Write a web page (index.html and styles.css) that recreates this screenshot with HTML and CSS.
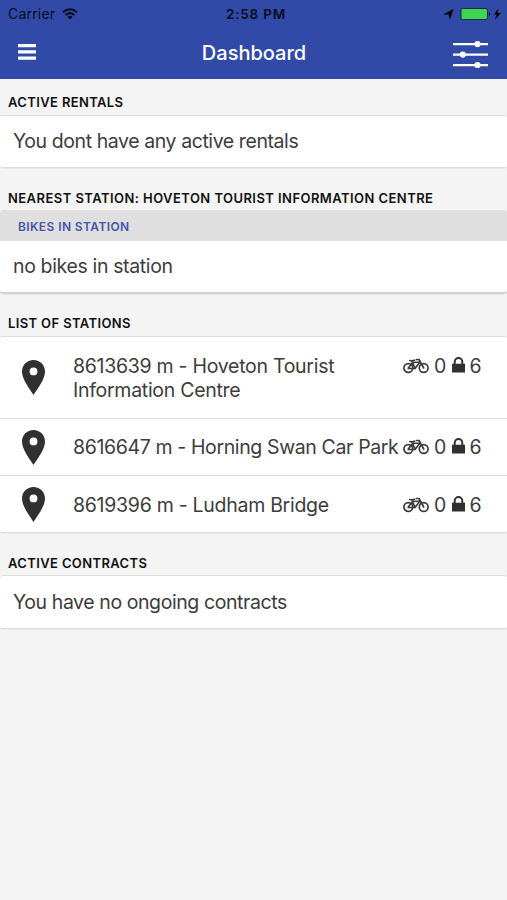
FILE: index.html
```html
<!DOCTYPE html>
<html lang="en">
<head>
<meta charset="utf-8">
<title>Dashboard</title>
<link rel="stylesheet" href="styles.css">
</head>
<body>
<svg class="defs" width="0" height="0" aria-hidden="true">
  <symbol id="pin" viewBox="0 0 23 35"><path fill-rule="evenodd" d="M11.500 0C5 0 0 5 0 11.500C0 19 7 28 11.500 35C16 28 23 19 23 11.500C23 5 18 0 11.500 0ZM11.500 7.500a3.900 3.900 0 1 1 0 7.800a3.900 3.900 0 1 1 0-7.800Z"/></symbol>
  <symbol id="bike" viewBox="0 0 26 16"><g fill="none" stroke="currentColor" stroke-width="1.700" stroke-linecap="round" stroke-linejoin="round"><circle cx="5.300" cy="10" r="4.400"/><circle cx="20.700" cy="10" r="4.400"/><path d="M5.300 10L9.500 4.500L17 4L12 10.500H5.300M9 3L12 10.500M6.800 2.500Q9.500 3.200 11.500 2.200M20.700 10L16 1.500H13.500"/></g></symbol>
  <symbol id="lock" viewBox="0 0 13 16"><path d="M0 6.800h13v8.700H0z"/><path d="M2.700 7.500V4.800a3.800 3.800 0 0 1 7.600 0V7.500" fill="none" stroke="currentColor" stroke-width="2"/></symbol>
</svg>
<header class="header">
  <div class="status">
    <span class="carrier">Carrier</span>
    <svg class="wifi" viewBox="0 0 16 12"><g fill="none" stroke="#080c20" stroke-width="2"><path d="M1 4.300Q8-1.700 15 4.300M3.600 7Q8 3.300 12.400 7"/></g><path d="M5.500 8.700Q8 6.700 10.500 8.700L8 11.500z" fill="#080c20"/></svg>
    <span class="time">2:58 PM</span>
    <svg class="power" viewBox="0 0 59 14"><path d="M0 7.500L10.500 2L7 12.500L5.500 7.500z"/><rect x="18" y="1.500" width="26.500" height="11" rx="1.500" fill="#3ed651" stroke="#14234f"/><path d="M46 5q2 2 0 4zM55.500 1.500L51 7.500h2.500L52 12.500l6-6.500h-3.200z"/></svg>
  </div>
  <nav class="nav">
    <svg class="menu" viewBox="0 0 18 16"><path d="M0 0h18v3.300H0zM0 6.200h18v3.300H0zM0 12.400h18v3.300H0z"/></svg>
    <h1 class="title">Dashboard</h1>
    <svg class="filters" viewBox="0 0 35 28"><path d="M0 3h35v2.200H0zM0 13.500h35v2.200H0zM0 24h35v2.200H0z"/><circle cx="24.500" cy="4.100" r="3.100"/><circle cx="9.800" cy="14.600" r="3.100"/><circle cx="24.500" cy="25.100" r="3.100"/></svg>
  </nav>
</header>
<main>
  <h2 class="heading first">ACTIVE RENTALS</h2>
  <section class="card"><p class="message">You dont have any active rentals</p></section>
  <h2 class="heading nearest">NEAREST STATION: HOVETON TOURIST INFORMATION CENTRE</h2>
  <section class="card station">
    <h3 class="subhead">BIKES IN STATION</h3>
    <p class="message short">no bikes in station</p>
  </section>
  <h2 class="heading">LIST OF STATIONS</h2>
  <ul class="card list">
    <li class="row tall"><svg class="pin"><use href="#pin"/></svg><span class="name">8613639 m - Hoveton Tourist<br>Information Centre</span><span class="counts"><svg class="bike"><use href="#bike"/></svg><b>0</b><svg class="lock"><use href="#lock"/></svg><b>6</b></span></li>
    <li class="row"><svg class="pin"><use href="#pin"/></svg><span class="name long">8616647 m - Horning Swan Car Park</span><span class="counts"><svg class="bike"><use href="#bike"/></svg><b>0</b><svg class="lock"><use href="#lock"/></svg><b>6</b></span></li>
    <li class="row"><svg class="pin"><use href="#pin"/></svg><span class="name">8619396 m - Ludham Bridge</span><span class="counts"><svg class="bike"><use href="#bike"/></svg><b>0</b><svg class="lock"><use href="#lock"/></svg><b>6</b></span></li>
  </ul>
  <h2 class="heading contracts">ACTIVE CONTRACTS</h2>
  <section class="card"><p class="message tall-message">You have no ongoing contracts</p></section>
</main>
</body>
</html>
```
FILE: styles.css
```css
* { box-sizing: border-box; }
body { margin: 0; min-height: 900px; background: #f4f4f4; color: #3c3c3c; font: 19.500px/24px Inter, "Liberation Sans", sans-serif; }
h1, h2, h3, p, ul { margin: 0; padding: 0; font-weight: 400; }
svg { display: block; flex: none; }
.defs { position: absolute; }
.header { height: 79px; background: #314aa8; }
.status { display: flex; align-items: center; height: 27px; color: #080c20; font-size: 14px; line-height: 27px; padding: 0 5px 0 8px; }
.carrier { width: 54px; letter-spacing: .2px; }
.wifi { width: 16px; height: 12px; }
.time { width: 365px; padding: 1px 0 0 148px; font-weight: 600; font-size: 13.500px; letter-spacing: .8px; white-space: nowrap; }
.power { width: 59px; height: 14px; }
.nav { display: flex; align-items: center; justify-content: space-between; height: 52px; padding: 0 19px 2px 18px; fill: #fff; color: #fff; }
.menu { width: 18px; height: 16px; }
.title { padding: 2px 0 0 19px; font-size: 20px; font-weight: 500; }
.filters { width: 35px; height: 28px; margin-top: 4px; }
.heading { height: 42px; padding: 19px 8px 0; color: #111; font-size: 13px; font-weight: 600; line-height: 20px; letter-spacing: .37px; white-space: nowrap; }
.heading.first { height: 36px; padding-top: 13px; }
.heading.nearest { padding-top: 20px; letter-spacing: .44px; }
.heading.contracts { padding-top: 20px; }
.card { background: #fff; border: 1px solid #ddd; border-width: 1px 0; border-radius: 3px; overflow: hidden; box-shadow: 0 1px 1px #e9e9e9; }
.message { height: 51px; padding-left: 13px; line-height: 51px; letter-spacing: -.42px; white-space: nowrap; }
.message.short { letter-spacing: -.36px; }
.message.tall-message { height: 52px; line-height: 52px; }
.station { height: 84px; border-bottom: 2px solid #d2d2d2; border-top: 0; }
.subhead { height: 31px; padding-left: 18px; background: #dfdfdf; color: #4355ad; font-size: 12px; font-weight: 600; line-height: 33px; letter-spacing: .4px; }
.list { list-style: none; }
.row { display: flex; align-items: center; height: 57px; padding-left: 22px; border-bottom: 1px solid #ddd; }
.row:last-child { height: 56px; padding-top: 1px; border-bottom: 0; }
.row.tall { height: 82px; }
.pin { width: 23px; height: 35px; margin-right: 28px; fill: #303030; }
.name { flex: none; width: 330px; letter-spacing: -.28px; white-space: nowrap; }
.name.long { letter-spacing: -.37px; }
.counts { display: flex; align-items: center; gap: 5px; }
.tall .counts { align-self: flex-start; margin-top: 17px; }
.counts b { width: 12.500px; font-weight: 400; }
.bike { width: 26px; height: 16px; }
.lock { width: 13px; height: 16px; margin-top: -2px; fill: #303030; color: #303030; }
```
